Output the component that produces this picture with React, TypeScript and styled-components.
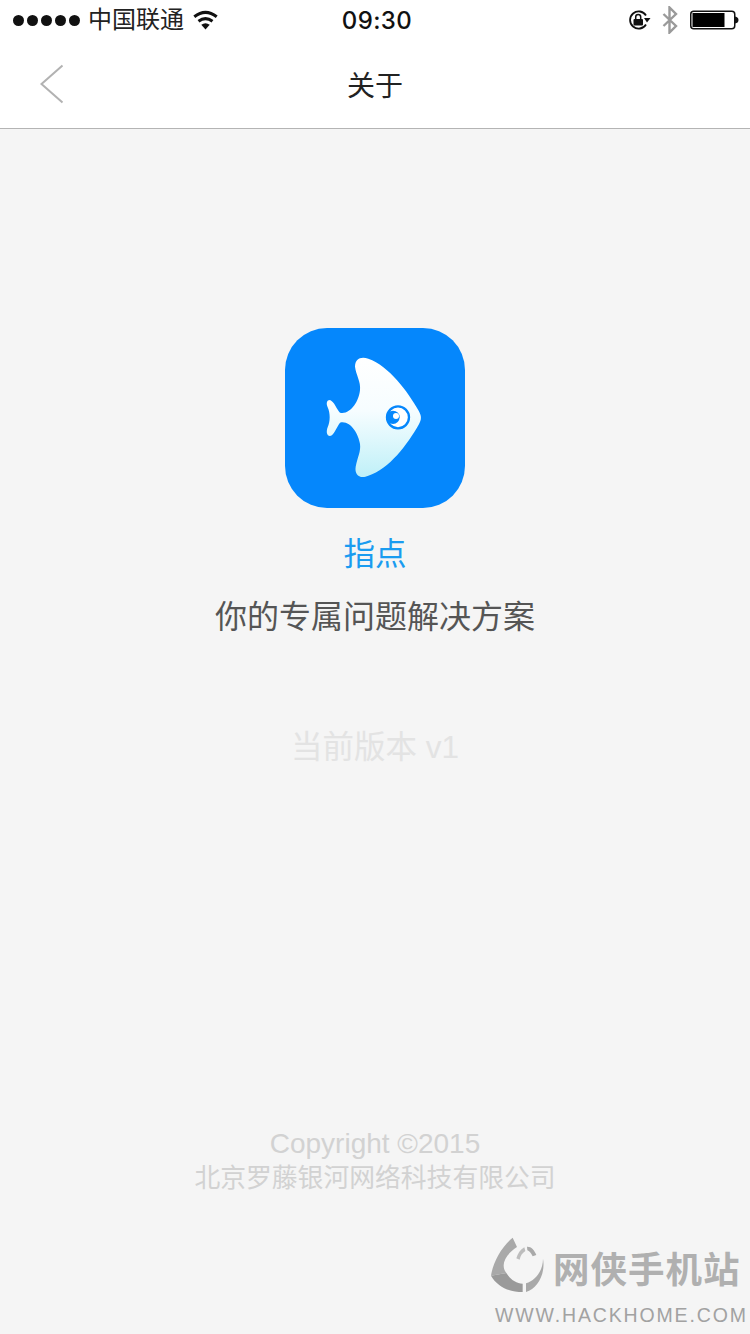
import React from "react";
import styled, { createGlobalStyle } from "styled-components";

const Global = createGlobalStyle`
  html, body { margin: 0; padding: 0; background: #f5f5f5; }
  * { box-sizing: border-box; }
`;
const cjk = `"Liberation Sans", "Noto Sans CJK SC", sans-serif`;

const Page = styled.div`
  position: relative;
  width: 750px;
  height: 1334px;
  display: flex;
  flex-direction: column;
  overflow: hidden;
  background: #f5f5f5;
  font-family: ${cjk};
`;
const Header = styled.header`
  background: #fff;
  height: 129px;
  border-bottom: 1px solid #b4b4b4;
  display: flex;
  flex-direction: column;
`;
const StatusBar = styled.div`
  height: 40px;
  display: grid;
  grid-template-columns: 1fr auto 1fr;
  align-items: center;
  padding: 0 11px 0 13px;
  color: #111;
`;
const StatusLeft = styled.div`
  display: flex;
  align-items: center;
`;
const StatusRight = styled.div`
  display: flex;
  align-items: center;
  justify-content: flex-end;
  gap: 11px;
`;
const Dots = styled.div`
  display: flex;
  gap: 3px;
  margin-right: 8px;
`;
const Dot = styled.span`
  width: 11px;
  height: 11px;
  border-radius: 50%;
  background: #111;
`;
const Carrier = styled.span`
  font-size: 24px;
  line-height: 40px;
  margin-right: 8px;
  color: #222;
`;
const Clock = styled.span`
  font-size: 24px;
  font-weight: 500;
  letter-spacing: 0.4px;
  margin-left: 2px;
  font-family: Inter, "Liberation Sans", sans-serif;
  color: #111;
`;
const NavBar = styled.nav`
  flex: 1;
  display: flex;
  align-items: center;
  justify-content: center;
  position: relative;
`;
const BackIcon = styled.svg`
  position: absolute;
  left: 38px;
  top: 23px;
`;
const Title = styled.h1`
  margin: 0;
  font-size: 28px;
  font-weight: 400;
  color: #222;
`;
const Main = styled.main`
  flex: 1;
  display: flex;
  flex-direction: column;
  align-items: center;
  padding-top: 199px;
`;
const AppIcon = styled.svg`
  display: block;
  border-radius: 42px;
`;
const AppName = styled.div`
  margin-top: 24px;
  font-size: 31.5px;
  line-height: 44px;
  color: #1a9cf0;
`;
const Slogan = styled.div`
  margin-top: 19px;
  font-size: 32px;
  line-height: 44px;
  color: #555;
`;
const Version = styled.div`
  margin-top: 86px;
  font-size: 31.5px;
  line-height: 44px;
  color: #e3e3e3;
`;
const Footer = styled.footer`
  margin-top: auto;
  margin-bottom: 139px;
  text-align: center;
  color: #d2d2d2;
  line-height: 34px;
`;
const FooterLine = styled.div<{ $latin?: boolean }>`
  font-size: ${(p) => (p.$latin ? 28 : 25.8)}px;
`;
const Watermark = styled.div`
  position: absolute;
  left: 490px;
  top: 1237px;
  width: 256px;
`;
const MarkTop = styled.div`
  display: flex;
  align-items: flex-start;
`;
const MarkName = styled.div`
  margin: 6px 0 0 9px;
  font-size: 36.5px;
  font-weight: 700;
  line-height: 56px;
  letter-spacing: 1px;
  white-space: nowrap;
  color: #b0b0b0;
`;
const MarkUrl = styled.div`
  margin: 5px 0 0 5px;
  font-size: 19.5px;
  line-height: 22px;
  letter-spacing: 1.85px;
  color: #a2a2a2;
  white-space: nowrap;
`;

export default function App() {
  return (
    <Page>
      <Global />
      <Header>
        <StatusBar>
          <StatusLeft>
            <Dots>{[0, 1, 2, 3, 4].map((i) => <Dot key={i} />)}</Dots>
            <Carrier>中国联通</Carrier>
            <svg width="27" height="20" viewBox="0 0 26 20">
              <path d="M13 19.5 L8.8 14.8 Q13 11.8 17.2 14.8 Z" fill="#111" />
              <path d="M6 11.3 Q13 6 20 11.3" fill="none" stroke="#111" strokeWidth="3" />
              <path d="M1.8 6.8 Q13 -2 24.2 6.8" fill="none" stroke="#111" strokeWidth="3" />
            </svg>
          </StatusLeft>
          <Clock>09:30</Clock>
          <StatusRight>
            <svg width="24" height="20" viewBox="0 0 24 20">
              <path d="M19 14.5 A8.6 8.6 0 1 1 19 5.5" fill="none" stroke="#111" strokeWidth="1.8" />
              <path d="M17 8 L23.5 8 L20 12.5 Z" fill="#111" />
              <rect x="6.5" y="9" width="9.5" height="6.5" rx="1" fill="#111" />
              <path d="M8.7 9 V7 A2.5 2.5 0 0 1 13.7 7 V9" fill="none" stroke="#111" strokeWidth="1.5" />
            </svg>
            <svg width="16" height="28" viewBox="0 0 16 28">
              <path d="M1.5 8 L14 20 L7.5 26.5 V1.5 L14 8 L1.5 20" fill="none" stroke="#9a9a9a" strokeWidth="2.4" />
            </svg>
            <svg width="50" height="20" viewBox="0 0 50 20">
              <rect x="1.75" y="1.25" width="44" height="17.5" rx="3" fill="#fff" stroke="#111" strokeWidth="1.5" />
              <rect x="3.5" y="3" width="32" height="14" fill="#000" />
              <path d="M46 6.5 Q49.5 7 49.5 10 Q49.5 13 46 13.5 Z" fill="#111" />
            </svg>
          </StatusRight>
        </StatusBar>
        <NavBar>
          <BackIcon width="28" height="42" viewBox="0 0 28 42">
            <path d="M24.5 2.5 L3.5 21 L24.5 39.5" fill="none" stroke="#b2b2b2" strokeWidth="2" />
          </BackIcon>
          <Title>关于</Title>
        </NavBar>
      </Header>
      <Main>
        <AppIcon width="180" height="180" viewBox="30 24 540 540">
          <defs>
            <linearGradient id="fishFill" x1="0" y1="0" x2="0" y2="1">
              <stop offset="0" stopColor="#ffffff" />
              <stop offset="0.45" stopColor="#f6fdff" />
              <stop offset="1" stopColor="#bff0f8" />
            </linearGradient>
          </defs>
          <rect x="30" y="24" width="540" height="540" fill="#0587fc" />
          <path
            d="M240 140 C240 116 258 108 280 116 C342 138 398 214 431 272 C440 288 440 298 431 314 C398 372 342 448 280 467 C255 478 238 465 242 440 C248 410 258 395 255 372 C250 340 225 300 195 308 C185 320 178 345 165 348 C155 348 153 335 158 322 C166 305 166 280 158 262 C153 250 155 240 165 240 C178 245 185 268 195 278 C225 285 252 245 255 210 C258 185 243 165 240 140 Z"
            fill="url(#fishFill)"
          />
          <circle cx="369" cy="292" r="33" fill="#fff" stroke="#0587fc" strokeWidth="7" />
          <circle cx="354" cy="292" r="20" fill="#0587fc" />
          <circle cx="363" cy="288" r="9" fill="#fff" />
        </AppIcon>
        <AppName>指点</AppName>
        <Slogan>你的专属问题解决方案</Slogan>
        <Version>当前版本 v1</Version>
        <Footer>
          <FooterLine $latin>Copyright ©2015</FooterLine>
          <FooterLine>北京罗藤银河网络科技有限公司</FooterLine>
        </Footer>
      </Main>
      <Watermark>
        <MarkTop>
          <svg width="54" height="56" viewBox="28 40 160 168">
            <path d="M95 42 L108 70 C85 85 68 105 68 125 C68 135 71 142 76 148 L30 156 C35 120 60 70 95 42 Z" fill="#a9a9a9" />
            <path d="M30 156 L76 148 C88 168 105 178 125 180 L125 205 C85 205 50 190 30 156 Z" fill="#9a9a9a" />
            <path d="M135 205 L135 179 C165 170 186 140 186 105 C194 150 170 195 135 205 Z" fill="#a9a9a9" />
            <path d="M106 104 C110 90 118 78 130 71 L133 82 C124 88 118 96 116 108 Z" fill="#bdbdbd" />
            <path d="M138 69 C150 68 160 78 166 94 L155 98 C150 88 145 82 139 80 Z" fill="#a9a9a9" />
          </svg>
          <MarkName>网侠手机站</MarkName>
        </MarkTop>
        <MarkUrl>WWW.HACKHOME.COM</MarkUrl>
      </Watermark>
    </Page>
  );
}
